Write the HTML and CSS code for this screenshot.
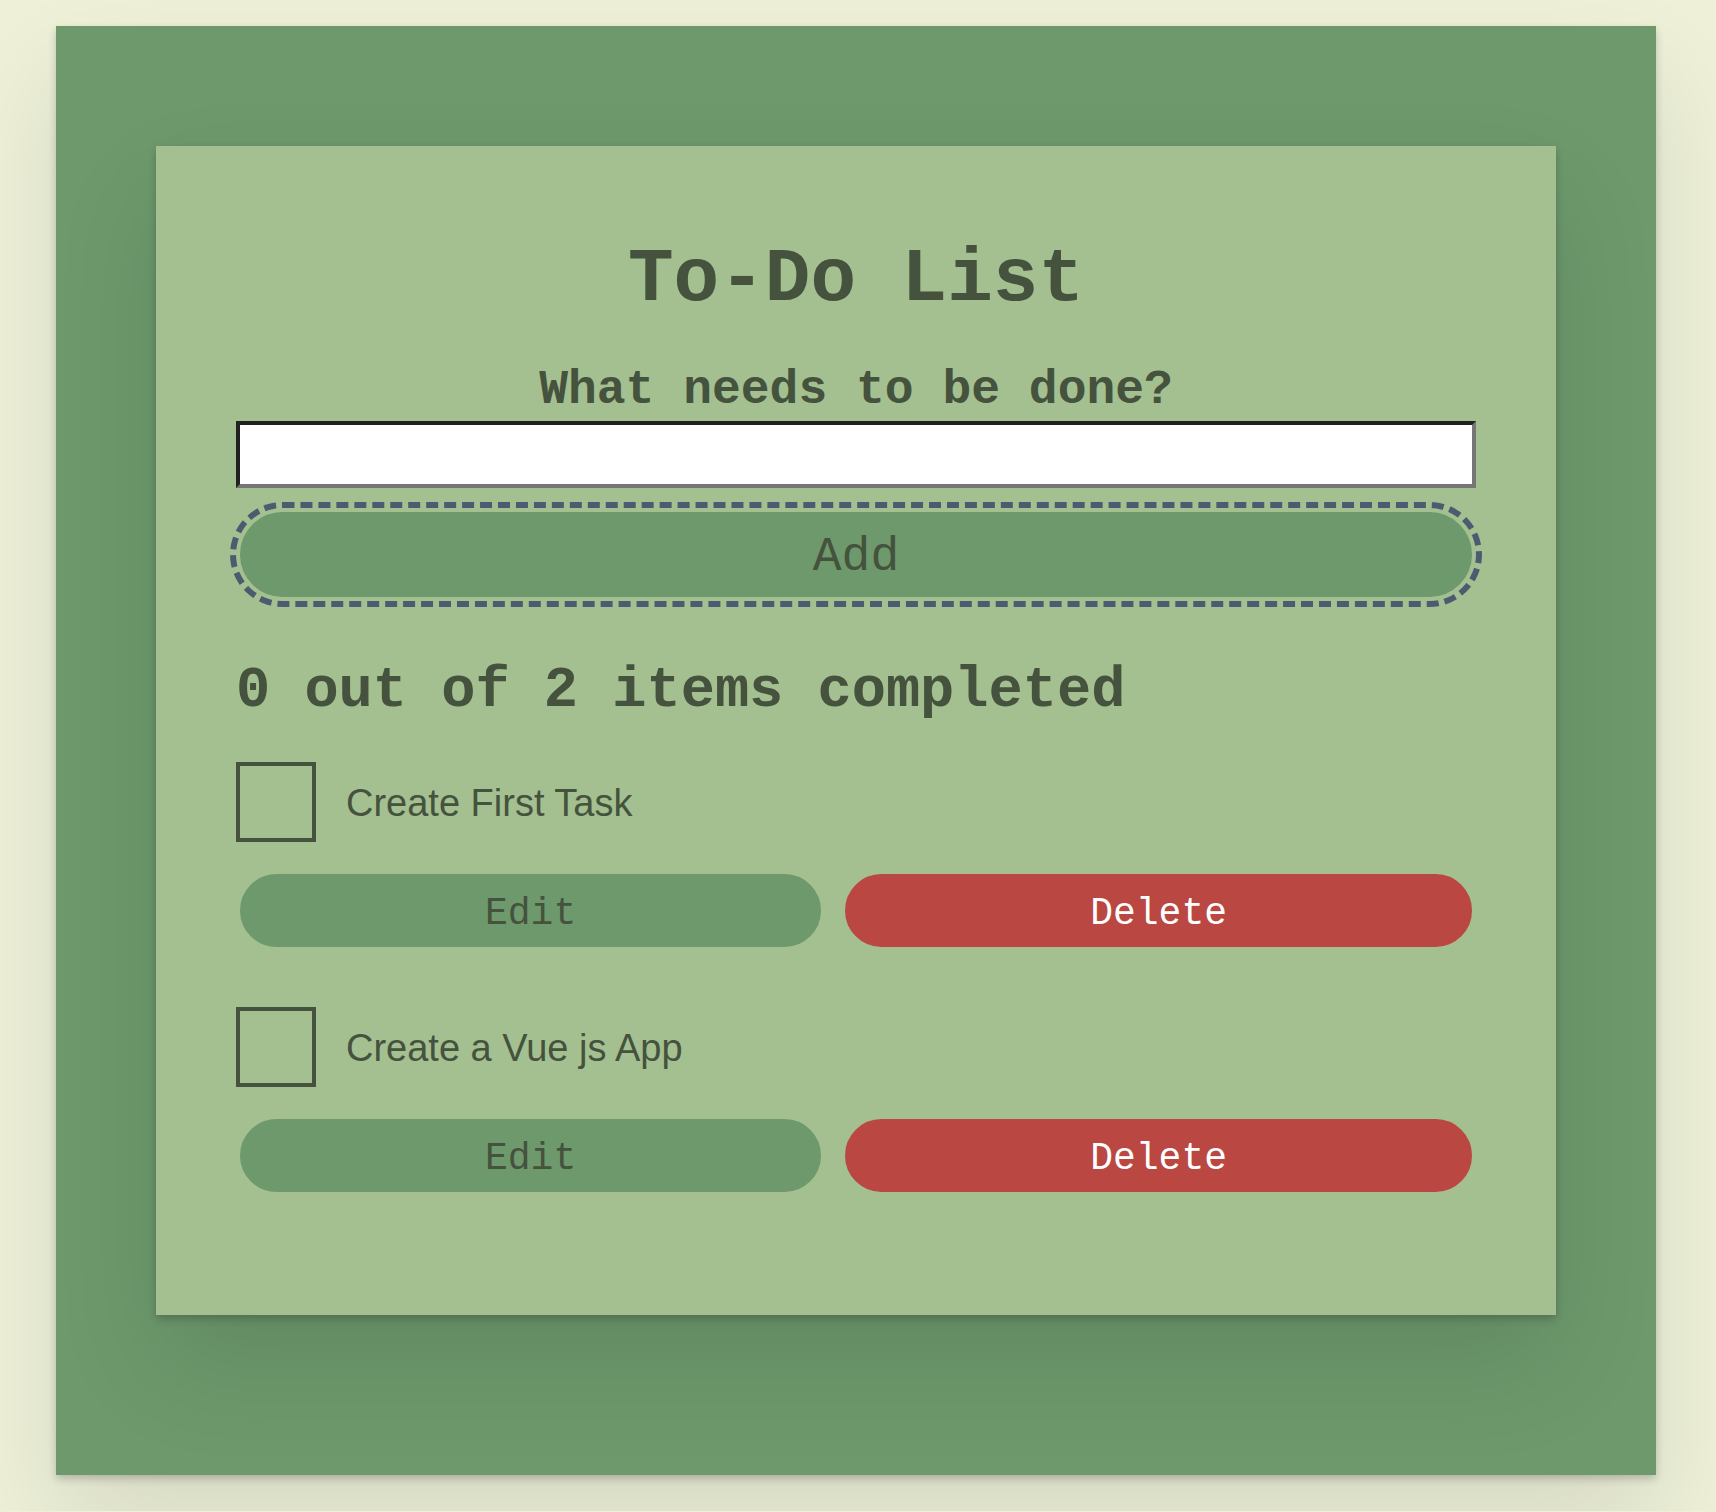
FILE: index.html
```html
<!DOCTYPE html>
<html lang="en">
<head>
  <meta charset="utf-8">
  <meta name="viewport" content="width=device-width, initial-scale=1">
  <title>To-Do List</title>
  <link rel="stylesheet" href="styles.css">
</head>
<body>
  <div class="frame">
    <main class="card">
      <h1 class="title">To-Do List</h1>
      <form class="new-item">
        <label class="new-item-label" for="new-todo">What needs to be done?</label>
        <input class="new-item-input" type="text" id="new-todo" name="new-todo" autocomplete="off">
        <button class="btn btn-large btn-focused" type="button">Add</button>
      </form>
      <h2 class="summary">0 out of 2 items completed</h2>
      <ul class="items">
        <li class="item">
          <div class="item-check">
            <input class="checkbox" type="checkbox" id="todo-1">
            <label class="item-label" for="todo-1">Create First Task</label>
          </div>
          <div class="item-actions">
            <button class="btn" type="button">Edit</button>
            <button class="btn btn-danger" type="button">Delete</button>
          </div>
        </li>
        <li class="item">
          <div class="item-check">
            <input class="checkbox" type="checkbox" id="todo-2">
            <label class="item-label" for="todo-2">Create a Vue js App</label>
          </div>
          <div class="item-actions">
            <button class="btn" type="button">Edit</button>
            <button class="btn btn-danger" type="button">Delete</button>
          </div>
        </li>
      </ul>
    </main>
  </div>
</body>
</html>
```
FILE: styles.css
```css
:root {
  --cream: #eef1d8;
  --light-green: #a4c090;
  --green: #6d996c;
  --dark: #45523d;
  --red: #ba4742;
  --slate: #4c5c70;
  --mono: "Liberation Mono", "Courier New", monospace;
  --sans: "Liberation Sans", Arial, sans-serif;
  --shadow: 0 4px 8px rgba(0, 0, 0, 0.2), 0 50px 100px rgba(0, 0, 0, 0.1);
}

* {
  box-sizing: border-box;
}

body {
  margin: 0;
  padding: 26px 60px 36px 56px;
  background: var(--cream);
  color: var(--dark);
  font-family: var(--mono);
}

.frame {
  padding: 120px 100px 160px;
  background: var(--green);
  box-shadow: var(--shadow);
}

.card {
  padding: 96px 80px 119px;
  background: var(--light-green);
  box-shadow: var(--shadow);
}

.title {
  margin: 0 0 44px;
  font-size: 76px;
  line-height: 76px;
  text-align: center;
}

.new-item {
  display: flex;
  flex-direction: column;
}

.new-item-label {
  margin-bottom: 3px;
  font-size: 48px;
  font-weight: bold;
  line-height: 56px;
  text-align: center;
}

.new-item-input {
  height: 67px;
  margin: 0 0 20px;
  padding: 0 8px;
  border: 4px solid;
  border-color: #212121 #767676 #767676 #212121;
  border-radius: 0;
  background: #fff;
  color: var(--dark);
  font: 38px var(--sans);
}

.btn {
  flex: 1 1 auto;
  margin: 0;
  padding: 18px 20px 12px;
  border: 4px solid var(--light-green);
  border-radius: 60px;
  background: var(--green);
  color: var(--dark);
  font: 38px/43px var(--mono);
  text-align: center;
  cursor: pointer;
}

.btn-large {
  font-size: 48px;
  line-height: 55px;
}

.btn-focused {
  outline: 6px dashed var(--slate);
}

.btn-danger {
  background: var(--red);
  color: #fff;
}

.summary {
  margin: 60px 0 41px;
  font-size: 57px;
  line-height: 60px;
}

.items {
  display: flex;
  flex-direction: column;
  gap: 56px;
  margin: 0;
  padding: 0;
  list-style: none;
}

.item {
  display: flex;
  flex-direction: column;
  gap: 28px;
}

.item-check {
  display: flex;
  align-items: center;
  gap: 30px;
}

.checkbox {
  flex: none;
  width: 80px;
  height: 80px;
  margin: 0;
  border: 4px solid var(--dark);
  appearance: none;
}

.checkbox:checked {
  background: var(--dark);
  box-shadow: inset 0 0 0 12px var(--light-green);
}

.item-label {
  padding-top: 2px;
  font: 38px/44px var(--sans);
}

.item-actions {
  display: flex;
  gap: 16px;
}
```
